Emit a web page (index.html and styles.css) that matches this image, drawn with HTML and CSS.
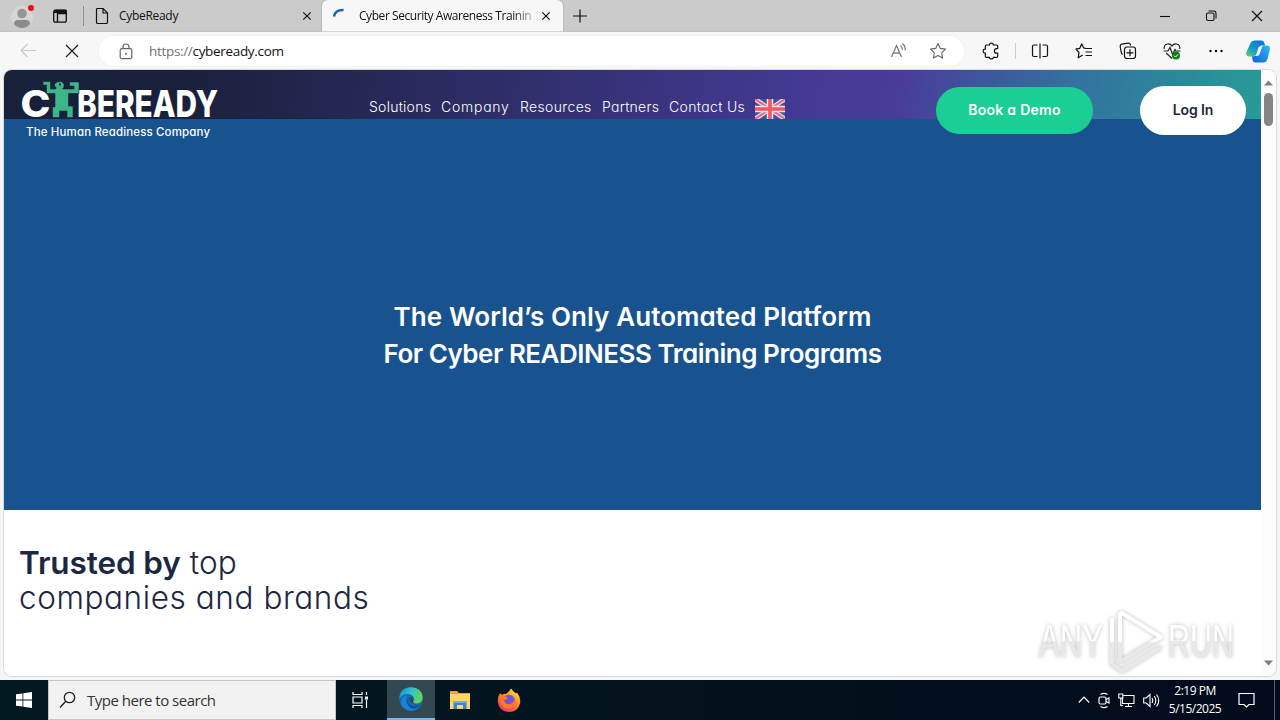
FILE: index.html
```
<!DOCTYPE html>
<html lang="en">
<head>
<meta charset="utf-8">
<title>CybeReady</title>
<link rel="stylesheet" href="styles.css">
</head>
<body>
<div class="desktop">
  <div class="tabstrip">
    <div class="profile">
      <svg width="26" height="28" viewBox="0 0 26 28"><circle cx="12" cy="15" r="11" fill="#d8d5d2"/><circle cx="12" cy="11.500" r="4.800" fill="#969696"/><path d="M4 22q0-4 4-4h8q4 0 4 4-3 4-8 4t-8-4z" fill="#8b8b8b"/><circle cx="21" cy="6" r="3" fill="#e80d18"/></svg>
    </div>
    <svg class="workspaces" width="16" height="16" viewBox="0 0 16 16"><rect x="1.7" y="2.2" width="12.6" height="12" rx="2" fill="none" stroke="#111" stroke-width="1.3"/><path d="M2 2.5h12v3H5.5V14" fill="none" stroke="#111" stroke-width="1.4"/><path d="M2 2h12v3H2z" fill="#111"/></svg>
    <div class="strip-rule"></div>
    <div class="tab tab-idle">
      <svg width="14" height="18" viewBox="0 0 14 18"><path d="M2.5 1.5h5.7l4.3 4.4v9.3q0 1.3-1.3 1.3H2.8q-1.3 0-1.3-1.3V2.5q0-1 1-1zM8 1.7V6h4.3" fill="none" stroke="#111" stroke-width="1.2"/></svg>
      <span class="tab-title">CybeReady</span>
      <svg class="tab-x" width="10" height="10" viewBox="0 0 10 10"><path d="M1.3 1.3l7.4 7.4M8.7 1.3L1.3 8.7" stroke="#111" stroke-width="1.2"/></svg>
    </div>
    <div class="tab tab-active">
      <svg width="16" height="16" viewBox="0 0 16 16"><path d="M2 8.5Q3 1.8 11.5 2" fill="none" stroke="#1b5fa5" stroke-width="2.4"/></svg>
      <span class="tab-title fade">Cyber Security Awareness Trainin</span>
      <svg class="tab-x" width="10" height="10" viewBox="0 0 10 10"><path d="M1.3 1.3l7.4 7.4M8.7 1.3L1.3 8.7" stroke="#111" stroke-width="1.2"/></svg>
    </div>
    <svg class="newtab" width="14" height="14" viewBox="0 0 14 14"><path d="M7 .5v13M0 7h14" stroke="#111" stroke-width="1.2"/></svg>
    <div class="window-buttons">
      <svg width="12" height="12" viewBox="0 0 12 12"><path d="M1 6.5h10" stroke="#111" stroke-width="1.1"/></svg>
      <svg width="12" height="12" viewBox="0 0 12 12"><rect x="1.5" y="3" width="7.5" height="7.5" rx="1.5" fill="none" stroke="#111" stroke-width="1.1"/><path d="M3.5 1h5Q11 1 11 3.5v5" fill="none" stroke="#111" stroke-width="1.1"/></svg>
      <svg width="12" height="12" viewBox="0 0 12 12"><path d="M1 1l10 10M11 1L1 11" stroke="#111" stroke-width="1.2"/></svg>
    </div>
  </div>

  <div class="toolbar">
    <svg class="back" width="18" height="16" viewBox="0 0 18 16"><path d="M16 7.500H1.500M7.500 1L1 7.500 7.500 14" fill="none" stroke="#c9c9c9" stroke-width="1.2"/></svg>
    <svg class="stop" width="14" height="14" viewBox="0 0 14 14"><path d="M1 1l12 12M13 1L1 13" stroke="#222" stroke-width="1.2"/></svg>
    <div class="address">
      <svg width="14" height="17" viewBox="0 0 14 17"><rect x="1.2" y="5.7" width="11.6" height="10" rx="1.8" fill="none" stroke="#666" stroke-width="1.2"/><path d="M4 5.5V4q0-3 3-3t3 3v1.5" fill="none" stroke="#666" stroke-width="1.2"/><circle cx="7" cy="10.7" r="1" fill="#666"/></svg>
      <span class="url"><span class="scheme">https://</span>cybeready.com</span>
      <svg class="read" width="18" height="18" viewBox="0 0 18 18"><path d="M1.5 15L6.5 3.500 11.5 15M3.2 11.2h6.600M10.500 3.500q2 1.500 1.800 4.200M12.500 1.500q3.200 2.800 2.700 7" fill="none" stroke="#767676" stroke-width="1.2"/></svg>
      <svg width="18" height="18" viewBox="0 0 18 18"><path d="M9 1.5l2.3 4.9 5.2.7-3.8 3.7.9 5.3L9 13.5l-4.6 2.6.9-5.3L1.5 7.1l5.2-.7z" fill="none" stroke="#666" stroke-width="1.1" stroke-linejoin="round"/></svg>
    </div>
    <div class="actions">
      <svg width="18" height="18" viewBox="0 0 18 18"><path d="M4.500 3h3q-.1-1.900 1.900-1.900T11.300 3H14.500q1.200 0 1.200 1.200v2.400h-1.200q-2.100 0-2.100 2.300t2.100 2.300h1.200v3q0 1.200-1.200 1.200h-3.200q.1 1.500-1.900 1.500t-1.900-1.500h-3q-1.200 0-1.200-1.200v-3.100q-2.100.1-2.100-2t2.100-2V4.200Q3.300 3 4.500 3z" fill="none" stroke="#111" stroke-width="1.2" stroke-linejoin="round"/></svg>
      <div class="action-rule"></div>
      <svg width="18" height="18" viewBox="0 0 18 18"><path d="M6.500 3H3Q1.500 3 1.500 4.500v8.500q0 1.500 1.500 1.500h3.500M9 1.500v15M11.500 3H15q1.500 0 1.500 1.500v8.500q0 1.500-1.500 1.500h-3.500" fill="none" stroke="#111" stroke-width="1.2"/></svg>
      <svg width="18" height="18" viewBox="0 0 18 18"><path d="M10.500 6.400L8.700 5.900 6.700 1.800 4.800 6.300.9 7.100 4 10.500l-.8 5.300 4.500-2.700M10.500 6.500H17M10.500 10H17M10.500 13.500H17" fill="none" stroke="#111" stroke-width="1.2" stroke-linejoin="round"/></svg>
      <svg width="18" height="18" viewBox="0 0 18 18"><path d="M3.800 12.500Q2.500 12 2.200 10.500L1.200 4.500q-.2-2 1.500-2.300L9 1.200q2-.2 2.400 1.500l.2.800" fill="none" stroke="#111" stroke-width="1.200"/><rect x="5.500" y="5" width="11" height="11.500" rx="2.500" fill="none" stroke="#111" stroke-width="1.200"/><path d="M11 7.300v7M7.500 10.800h7" stroke="#111" stroke-width="1.200"/></svg>
      <svg width="18" height="18" viewBox="0 0 18 18"><path d="M1.200 7Q.8 2.500 4.500 2 7.500 1.600 9 4q1.500-2.400 4.500-2Q17.200 2.500 16.800 7M.5 9H5l2-3.500 2.500 7L12 7.500l1 1.500h4.500M3.200 11L9 16.500" fill="none" stroke="#222" stroke-width="1.200"/><circle cx="13" cy="13.500" r="4" fill="#137c17"/><path d="M11 13.600l1.500 1.500 2.600-2.800" fill="none" stroke="#fff" stroke-width="1"/></svg>
      <svg width="18" height="18" viewBox="0 0 18 18"><circle cx="3.500" cy="9" r="1.200"/><circle cx="9" cy="9" r="1.200"/><circle cx="14.500" cy="9" r="1.200"/></svg>
    </div>
    <svg class="copilot" width="24" height="23" viewBox="0 0 24 23"><defs><linearGradient id="ca" x1="0" y1="1" x2=".7" y2="0"><stop offset="0" stop-color="#67d65c"/><stop offset=".45" stop-color="#159fc4"/><stop offset="1" stop-color="#0877d6"/></linearGradient><linearGradient id="cb" x1="1" y1="0" x2="0" y2="1"><stop offset="0" stop-color="#2bbdf5"/><stop offset="1" stop-color="#145bdd"/></linearGradient></defs><path d="M4.500 3Q5.500.5 8.500.5h7Q17.800.5 18.300 3l.8 2.500h-3.500q-2.500 0-3.200 2.500l-1.800 6Q9.800 16.500 7 16.500H3Q-.5 16.500.3 12.500z" fill="url(#ca)"/><path d="M18 5.500h3q3.500 0 2.800 4L21.500 19Q20.500 22.500 17 22.500H9.500q-2.500 0-3-3l-.5-3q3 0 3.700-2.500h1.800q2 0 2.700-2.300l1.300-4q.7-2.200 2.500-2.200z" fill="url(#cb)"/><path d="M12.800 7h3l-2.200 7q-.7 2-2.800 2H8.500q1.500-.5 2-2z" fill="#fff"/></svg>
  </div>

  <div class="frame">
    <div class="page">
      <header class="site-header">
        <svg class="logo" width="200" height="60" viewBox="0 0 200 60">
          <g class="logo-word"><text x="-1.500" y="37" font-size="37" textLength="30" lengthAdjust="spacingAndGlyphs">C</text><text x="55" y="37" font-size="37" textLength="141" lengthAdjust="spacingAndGlyphs">BEREADY</text></g>
          <path d="M21 1.500h7.500V9H34V7l-1.500-.500V4L35 2l4.500-.500L42 4v3l-1.500 2H52V6h-4.500V2H57v11.500H46.500V26H51v11.500h-6V31h-7.500v6.500H30.500V27H33V13.500h-8.500V5H21z" fill="#3eb489" stroke="#17233d" stroke-width=".6"/>
          <path d="M37 3.500h2v2h-2z" fill="#17233d"/>
          <text class="logo-tag" x="4" y="55.500" textLength="184">The Human Readiness Company</text>
        </svg>
        <nav class="menu">
          <a class="w1">Solutions</a><a class="w2">Company</a><a class="w3">Resources</a><a class="w4">Partners</a><a class="w5">Contact Us</a>
          <svg width="30" height="20" viewBox="0 0 30 20"><path d="M0 0h30v20H0z" fill="#345aa0"/><path d="M0 0l30 20M30 0L0 20" stroke="#ead9eb" stroke-width="4.500"/><path d="M0 0l30 20M30 0L0 20" stroke="#ef6577" stroke-width="2"/><path d="M15 0v20M0 10h30" stroke="#f8e2e8" stroke-width="6.500"/><path d="M15 0v20M0 10h30" stroke="#f25766" stroke-width="3.600"/></svg>
        </nav>
        <a class="btn demo">Book a Demo</a>
        <a class="btn login">Log In</a>
      </header>
      <section class="hero"><h1><span class="h-one">The World’s Only Automated Platform</span><span class="h-two">For Cyber READINESS Training Programs</span></h1></section>
      <section class="trusted">
        <h2><span class="t-one"><b>Trusted by</b> <span>top</span></span><span class="t-two">companies and brands</span></h2>
      </section>
    </div>
    <div class="scrollbar">
      <svg width="9" height="6" viewBox="0 0 9 6"><path d="M0 5.500L4.500.5 9 5.500z" fill="#7d7d7d"/></svg>
      <div class="thumb"></div>
      <svg class="down" width="9" height="6" viewBox="0 0 9 6"><path d="M0 .5h9L4.500 5.500z" fill="#7d7d7d"/></svg>
    </div>
    <svg class="watermark" width="210" height="76" viewBox="0 0 210 76">
      <defs><linearGradient id="wm" x1="0" y1="0" x2="0" y2="1"><stop offset=".5" stop-color="#fff"/><stop offset=".52" stop-color="#e9e9e9"/></linearGradient></defs>
      <g class="wm-shape"><text x="8" y="54" textLength="64" lengthAdjust="spacingAndGlyphs">ANY</text><text x="137" y="54" textLength="66" lengthAdjust="spacingAndGlyphs">RUN</text>
      <path d="M81 61V15M89 9v50M89 9l41 25-41 25M81 61l10 7 39-24" fill="none" stroke="url(#wm)" stroke-width="4" stroke-linejoin="round"/></g>
    </svg>
  </div>

  <div class="taskbar">
    <div class="start"><svg width="16" height="16" viewBox="0 0 16 16"><path d="M0 2.300L6.500 1.400V7.600H0zM7.300 1.300L16 0v7.600H7.300zM0 8.400h6.500v6.200L0 13.700zM7.300 8.400H16V16l-8.700-1.300z" fill="#fff"/></svg></div>
    <div class="search"><svg width="18" height="18" viewBox="0 0 18 18"><circle cx="10.500" cy="6.500" r="5.200" fill="none" stroke="#222" stroke-width="1.300"/><path d="M6.800 10.200L1 16.500" stroke="#222" stroke-width="1.400"/></svg><span>Type here to search</span></div>
    <div class="task"><svg width="18" height="16" viewBox="0 0 18 16"><path d="M2 0v2.500h9V0M2 16v-2.500h9V16M2 5h9v6H2zM15.500 0v3M15.500 8v8" fill="none" stroke="#fff" stroke-width="1.200"/><path d="M14 4.500h3v3h-3z" fill="#fff"/></svg></div>
    <div class="task running"><svg width="24" height="24" viewBox="0 0 24 24"><defs><linearGradient id="ea" x1="0" y1="0" x2="1" y2=".4"><stop offset="0" stop-color="#1689cf"/><stop offset=".5" stop-color="#32bdd5"/><stop offset="1" stop-color="#62d35e"/></linearGradient></defs><circle cx="12" cy="12" r="11.700" fill="#1268b9"/><path d="M.3 12Q.5 1 12 .3 23 .8 23.700 10q.1 6.300-6 6.500-4 0-3.700-2 1.800-1.400 1-3.500Q13 6.500 8 7 2.500 7.500.3 12z" fill="url(#ea)"/><path d="M8.300 8Q4.500 15 10.500 19.500 16 22.500 22.500 17.200 19 24 12 23.700 3 23 2 16 2 9.500 8.300 8z" fill="#1683d5"/><path d="M9.200 12Q8 16.200 12 18.500t10-1.200q-4 6-10 3.700-5.500-3-2.800-9z" fill="#164c8d"/><path d="M10 11.500q1-3 4 .500.900 1.500 0 2.500-.2 1.500 2 2-5 .5-6-5z" fill="#35484e"/></svg></div>
    <div class="task"><svg width="22" height="20" viewBox="0 0 22 20"><path d="M1 1h7l2 2h11v16H1z" fill="#e9aa29"/><path d="M1 4h20v15H1z" fill="#ffd568"/><path d="M4.500 19v-8h13v8H14v-4H8v4z" fill="#3287cd"/><path d="M4.500 11h13v2h-13z" fill="#64b3e9"/></svg></div>
    <div class="task"><svg width="24" height="25" viewBox="0 0 24 25"><defs><linearGradient id="fx" x1=".8" y1="0" x2=".2" y2="1"><stop offset="0" stop-color="#ffed3b"/><stop offset=".45" stop-color="#ff8a1e"/><stop offset="1" stop-color="#f52870"/></linearGradient></defs><path d="M3 5l2 2q2-2 4-1Q12 4 14 .5q2 3 5 5l1-1q4 5 3 11Q21 24 12 24 2 23.500.8 14 .5 9 3 5z" fill="url(#fx)"/><circle cx="12" cy="12.500" r="5.800" fill="#7651df"/><path d="M5 8q4 0 6 2-1 2-4 2 1 5 6 4 4-1 4-5 3 7-3 9-7 2-10-4-1-4 1-8z" fill="#ff7926"/></svg></div>
    <div class="tray">
      <svg width="12" height="8" viewBox="0 0 12 8"><path d="M.8 6.500L6 1.200l5.200 5.300" fill="none" stroke="#fff" stroke-width="1.200"/></svg>
      <svg width="12" height="17" viewBox="0 0 12 17"><rect x="1" y="5" width="7" height="7" rx="1.500" fill="none" stroke="#fff" stroke-width="1.200"/><path d="M8 7.500l3-1.500v5L8 9.500M2.500 2.500Q6 .2 9.500 2.500M2.500 14.500Q6 16.800 9.500 14.500" fill="none" stroke="#fff" stroke-width="1.100"/></svg>
      <svg width="17" height="15" viewBox="0 0 17 15"><path d="M5.500 2.500H16v8H4.500V5M7 13.500h7M10.500 10.500v3M.8 1h4v4h-4zM2.800 5v7.500h2" fill="none" stroke="#fff" stroke-width="1.100"/></svg>
      <svg width="17" height="15" viewBox="0 0 17 15"><path d="M.7 5h2.500L7 1.500v12L3.200 10H.7zM9 5q1.500 2.500 0 5M11.300 3q3 4.500 0 9M13.500 1.500q4.500 6 0 12" fill="none" stroke="#fff" stroke-width="1.100"/></svg>
    </div>
    <div class="clock"><span>2:19 PM</span><span>5/15/2025</span></div>
    <svg class="notify" width="17" height="17" viewBox="0 0 17 17"><path d="M1 1.500h15v11h-5L8.500 15 6 12.500H1z" fill="none" stroke="#fff" stroke-width="1.200"/></svg>
    <div class="peek"></div>
  </div>
</div>
</body>
</html>
```
FILE: styles.css
```
* { box-sizing: border-box; }
body { margin: 0; overflow: hidden; }
svg { display: block; flex: none; }
.desktop { width: 1280px; height: 720px; display: flex; flex-direction: column; background: #f4f5f7; font-family: "Open Sans", "Noto Sans", sans-serif; color: #111; }

.tabstrip { height: 32px; flex: none; display: flex; align-items: center; background: #cbcbcb; border-bottom: 1px solid #c2c2c2; }
.profile { margin-left: 10px; width: 26px; }
.workspaces { margin-left: 16px; }
.strip-rule { width: 1px; height: 20px; margin-left: 15px; background: #929292; }
.tab { height: 32px; display: flex; align-items: center; font-size: 12px; white-space: nowrap; }
.tab-idle { width: 238px; padding: 0 10px 0 11px; }
.tab-idle .tab-title { margin-left: 10px; letter-spacing: -.3px; }
.tab-active { width: 241px; padding: 0 12px 0 10px; background: #f7f7f7; border-radius: 6px 6px 0 0; position: relative; box-shadow: 0 0 2px #999; clip-path: inset(0 -3px); }
.tab-active .tab-title { margin-left: 11px; width: 174px; overflow: hidden; letter-spacing: -.44px; }
.fade { -webkit-mask-image: linear-gradient(90deg, #000 88%, rgba(0,0,0,.25)); mask-image: linear-gradient(90deg, #000 88%, rgba(0,0,0,.25)); }
.tab-x { margin-left: auto; }
.newtab { margin-left: 10px; }
.window-buttons { display: flex; gap: 34px; margin-left: auto; padding-right: 17px; }

.toolbar { height: 38px; flex: none; display: flex; align-items: center; background: #f7f7f7; }
.back { margin-left: 20px; }
.stop { margin-left: 27px; }
.address { width: 865px; height: 30px; margin-left: 20px; padding: 0 17px 0 20px; border-radius: 15px; background: #fff; display: flex; align-items: center; box-shadow: 0 0 3px #eee; }
.url { margin-left: 16px; font-size: 13.500px; letter-spacing: -.32px; }
.scheme { color: #707070; }
.read { margin-left: auto; margin-right: 21px; }
.actions { display: flex; align-items: center; margin-left: 18px; gap: 26px; }
.action-rule { width: 1px; height: 16px; margin: 0 -11px 0 -11px; background: #ccc; }
.copilot { margin-left: 21px; }

.frame { height: 606px; flex: none; margin: 0 4px 4px; display: flex; position: relative; background: #fff; border-radius: 8px; overflow: hidden; box-shadow: 0 0 0 1px #dadada; }
.page { width: 1257px; display: flex; flex-direction: column; font-family: Inter, "Open Sans", sans-serif; font-feature-settings: "cv11"; }
.site-header { height: 49px; flex: none; display: flex; align-items: flex-start; position: relative; z-index: 1; background: linear-gradient(100deg, #17213a 0%, #19203a 14%, #41388e 60%, #493c9a 71%, #346fa0 84%, #269b97 100%); }
.logo { margin: 10px 0 0 18px; overflow: visible; }
.logo-word { font-family: Inter, sans-serif; font-weight: 800; fill: #fff; }
.logo-tag { font-size: 11.500px; font-weight: 500; fill: #fff; }
.menu { display: flex; margin: 27px 0 0 147px; gap: 10px; color: #fff; font-size: 14px; font-weight: 300; line-height: 20px; white-space: nowrap; }
.menu svg { margin-top: 2px; }
.w1 { width: 62px; letter-spacing: .25px; }
.w2 { width: 69px; letter-spacing: .75px; }
.w3 { width: 72px; letter-spacing: .35px; }
.w4 { width: 57px; letter-spacing: .25px; }
.w5 { width: 76px; letter-spacing: .35px; }
.btn { display: flex; align-items: center; justify-content: center; border-radius: 25px; font-size: 14px; font-weight: 600; white-space: nowrap; }
.demo { width: 157px; height: 47px; margin: 17px 0 0 151px; padding-bottom: 2px; background: #1bce94; color: #fff; letter-spacing: .25px; }
.login { width: 106px; height: 49px; margin: 16px 0 0 47px; padding-bottom: 2px; background: #fff; color: #1c263d; letter-spacing: -.1px; }
.hero { height: 391px; flex: none; background: #18538f; padding-top: 179px; }
.hero h1 { margin: 0; display: flex; flex-direction: column; align-items: center; color: #fff; font-size: 26px; font-weight: 600; line-height: 37px; white-space: nowrap; }
.h-one { letter-spacing: .08px; }
.h-two { letter-spacing: -.48px; }
.trusted { padding: 35px 0 0 15px; }
.trusted h2 { margin: 0; display: flex; flex-direction: column; color: #1c2743; font-size: 31.500px; font-weight: 300; line-height: 35px; white-space: nowrap; }
.trusted b { font-weight: 600; letter-spacing: -.1px; }
.t-one { letter-spacing: .1px; }
.t-two { letter-spacing: .58px; }
.scrollbar { width: 15px; display: flex; flex-direction: column; align-items: center; padding: 10px 0; background: #fcfcfc; }
.thumb { width: 9px; height: 33px; margin-top: 7px; border-radius: 5px; background: #858585; }
.down { margin-top: auto; }
.watermark { position: absolute; left: 1027px; top: 533px; overflow: visible; }
.wm-shape { font-family: "Liberation Sans", sans-serif; font-size: 47px; fill: url(#wm); filter: drop-shadow(0 0 2px #bbb); }

.taskbar { height: 40px; flex: none; display: flex; align-items: center; background: linear-gradient(90deg, #031921, #03121d 55%, #030b1c); color: #fff; }
.start { width: 48px; display: flex; justify-content: center; }
.search { width: 288px; height: 40px; display: flex; align-items: center; padding-left: 10px; background: #f2f2f2; border: 1px solid #c6c6c6; color: #333; font-size: 15px; }
.search span { margin-left: 10px; letter-spacing: -.5px; }
.task { width: 49px; height: 40px; display: flex; align-items: center; justify-content: center; }
.task:nth-child(3) { width: 51px; padding-right: 4px; }
.running { width: 48px; background: #334951; border-bottom: 2px solid #76b9ed; }
.tray { display: flex; align-items: center; gap: 8px; margin-left: auto; }
.clock { width: 70px; display: flex; flex-direction: column; align-items: center; font-size: 12px; line-height: 18px; letter-spacing: -.5px; }
.notify { margin-left: 8px; }
.peek { width: 1px; height: 40px; margin: 0 5px 0 19px; background: #59606b; }
```
